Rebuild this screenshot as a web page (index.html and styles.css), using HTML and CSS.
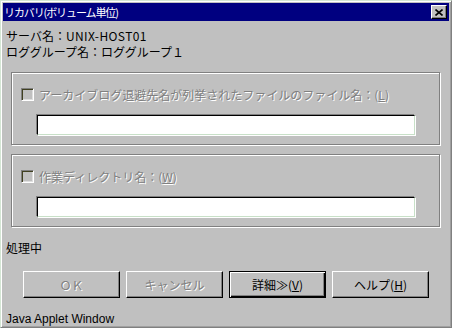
FILE: index.html
```html
<!DOCTYPE html>
<html>
    <head>
        <meta charset="utf-8">
        <title>リカバリ(ボリューム単位)</title>
        <link rel="stylesheet" href="styles.css">
    </head>
    <body>
        <div class="window">
            <div class="titlebar">
                <span class="title">リカバリ(ボリューム単位)</span>
                <span class="close">
                    <svg width="8" height="7" viewBox="0 0 8 7"><path d="M0.5 0.5L7.5 6.5M7.5 0.5L0.5 6.5" stroke="#000" stroke-width="1.6" fill="none"/></svg>
                </span>
            </div>
            <div class="content">
                <p class="info">サーバ名：<span class="ascii">UNIX-HOST01</span></p>
                <p class="info">ロググループ名：ロググループ１</p>
                <div class="group">
                    <div class="check">
                        <span class="box"></span>
                        <span class="etched">アーカイブログ退避先名が列挙されたファイルのファイル名：(<u>L</u>)</span>
                    </div>
                    <div class="field"></div>
                </div>
                <div class="group second">
                    <div class="check">
                        <span class="box"></span>
                        <span class="etched">作業ディレクトリ名：(<u>W</u>)</span>
                    </div>
                    <div class="field"></div>
                </div>
                <p class="status">処理中</p>
                <div class="buttons">
                    <span class="btn"><span class="etched">ＯＫ</span></span>
                    <span class="btn"><span class="etched">キャンセル</span></span>
                    <span class="btn default">詳細≫(<u>V</u>)</span>
                    <span class="btn">ヘルプ(<u>H</u>)</span>
                </div>
                <p class="footer">Java Applet Window</p>
            </div>
        </div>
    </body>
</html>
```

FILE: styles.css
```css
*{
    margin: 0;
    box-sizing: border-box;
}
html, body{
    background-color: #c0c0c0;
}
body{
    font-family: "Noto Sans CJK JP", "DejaVu Sans", sans-serif;
    font-size: 12px;
    color: #000;
}
.window{
    width: 452px;
    height: 328px;
    overflow: hidden;
    border: 1px solid;
    border-color: #d4e6d4 #808080 #808080 #d4e6d4;
    box-shadow: inset 1px 1px 0 #fff, inset -1px -1px 0 #a0a0a0;
    padding: 2px;
}
.titlebar{
    display: flex;
    align-items: center;
    justify-content: space-between;
    height: 18px;
    background-color: #000080;
    color: #fff;
    padding: 0 2px 0 1px;
}
.title{
    font-size: 11px;
    line-height: 18px;
    letter-spacing: -1.1px;
}
.close{
    display: flex;
    align-items: center;
    justify-content: center;
    width: 16px;
    height: 14px;
    background-color: #c0c0c0;
    border: 1px solid;
    border-color: #fff #000 #000 #fff;
    box-shadow: inset -1px -1px 0 #808080;
}
.close svg{
    display: block;
}
.content{
    padding: 7px 0 0 3px;
}
.info{
    line-height: 16px;
}
.ascii{
    letter-spacing: 0.4px;
}
.group{
    width: 429px;
    margin: 12px 0 0 5px;
    border: 1px solid #808080;
    box-shadow: inset 1px 1px 0 #fff, 1px 1px 0 #fff;
    padding: 15px 0 9px 9px;
}
.group.second{
    margin-top: 9px;
}
.check{
    display: flex;
    align-items: center;
    height: 13px;
    gap: 5px;
}
.box{
    width: 13px;
    height: 13px;
    border: 1px solid;
    border-color: #808080 #fff #fff #808080;
    box-shadow: inset 1px 1px 0 #404020, inset -1px -1px 0 #dfdfdf;
}
.etched{
    color: #808080;
    text-shadow: 1px 1px 0 #fff;
    line-height: 13px;
}
.etched u{
    text-decoration-color: #808080;
}
.field{
    width: 378px;
    height: 20px;
    margin: 14px 0 0 16px;
    background-color: #fff;
    border: 1px solid;
    border-color: #000 #c8e0c8 #c8e0c8 #000;
    box-shadow: -1px -1px 0 #808080, 1px 1px 0 #fff;
}
.status{
    margin-top: 13px;
    line-height: 16px;
}
.buttons{
    display: flex;
    gap: 6px;
    margin: 15px 0 0 17px;
}
.btn{
    display: flex;
    align-items: center;
    justify-content: center;
    width: 97px;
    height: 27px;
    border: 1px solid;
    border-color: #fff #000 #000 #fff;
    box-shadow: inset -1px -1px 0 #808080;
}
.btn.default{
    border-color: #000;
    box-shadow: inset 1px 1px 0 #fff, inset -1px -1px 0 #000, inset -2px -2px 0 #808080;
}
.footer{
    margin-top: 13px;
    line-height: 16px;
    font-family: "Liberation Sans", sans-serif;
}
```
